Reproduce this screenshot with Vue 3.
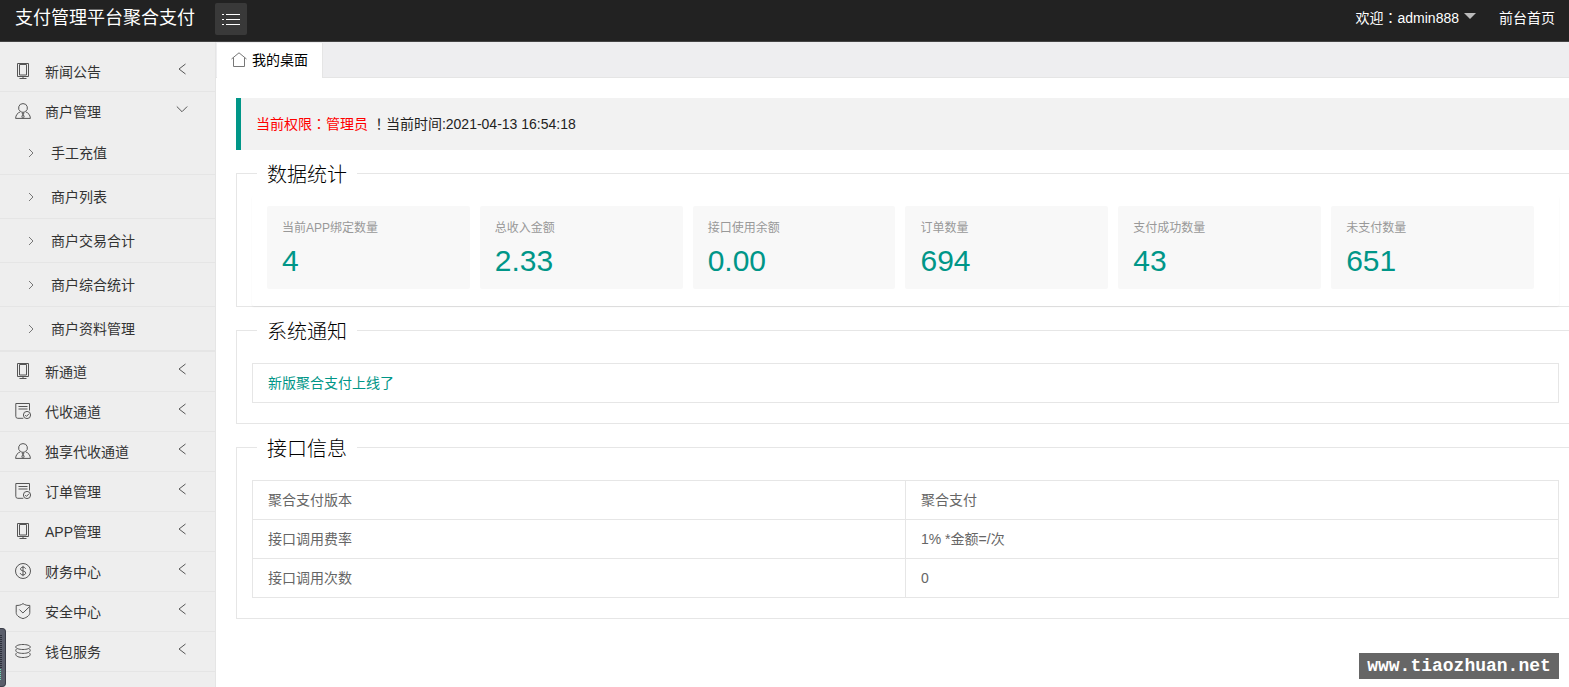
<script setup>
import { ref } from 'vue'

const menu = ref([
  { icon: 'phone', label: '新闻公告' },
  {
    icon: 'user',
    label: '商户管理',
    open: true,
    children: ['手工充值', '商户列表', '商户交易合计', '商户综合统计', '商户资料管理'],
  },
  { icon: 'phone', label: '新通道' },
  { icon: 'order', label: '代收通道' },
  { icon: 'user', label: '独享代收通道' },
  { icon: 'order', label: '订单管理' },
  { icon: 'phone', label: 'APP管理' },
  { icon: 'money', label: '财务中心' },
  { icon: 'shield', label: '安全中心' },
  { icon: 'coins', label: '钱包服务' },
])

const stats = [
  { label: '当前APP绑定数量', value: '4' },
  { label: '总收入金额', value: '2.33' },
  { label: '接口使用余额', value: '0.00' },
  { label: '订单数量', value: '694' },
  { label: '支付成功数量', value: '43' },
  { label: '未支付数量', value: '651' },
]

const info = [
  ['聚合支付版本', '聚合支付'],
  ['接口调用费率', '1% *金额=/次'],
  ['接口调用次数', '0'],
]

const icons = {
  phone: ['M2.500 .5h11v13h-11z', 'M4.500 1.500h7v10.500h-7z', 'M8 13.500v2M4.500 15.500h7'],
  user: [
    'M8 .6a4.300 4.300 0 0 1 2.300 8c-.7.5-1.400.7-2.300.7s-1.600-.2-2.300-.7A4.300 4.300 0 0 1 8 .6z',
    'M5.300 8.800C2.500 10 .8 12 .6 15.400h14.800c-.2-3.400-1.900-5.400-4.700-6.600',
    'M7.200 10.200h1.600l-.4 1.400.8 2.600L8 15.300l-1.200-1.100.8-2.600z',
  ],
  order: [
    'M14.500 7.500v-7H.8v12.800a2 2 0 0 0 2 2h5.500',
    'M3.500 3.500h9M3.500 6h9',
    'M12 8.400a3.600 3.600 0 1 1 0 7.200 3.600 3.600 0 0 1 0-7.200z',
    'M10.200 12l1.300 1.400 2.500-2.700',
  ],
  money: [
    'M8 .5a7.500 7.500 0 1 1 0 15 7.500 7.500 0 0 1 0-15z',
    'M10.500 5.700C10.200 4.600 9.300 4.200 8 4.200c-1.500 0-2.500.7-2.500 1.800 0 2.700 5.200 1.200 5.200 4 0 1.200-1.100 1.900-2.700 1.900-1.500 0-2.600-.6-2.800-1.900M8 2.800v10.400',
  ],
  shield: [
    'M8 .6c2 1.500 4.300 2 6.800 1.800v7.200c0 2.700-2.600 4.800-6.800 6-4.200-1.200-6.800-3.300-6.800-6V2.400C3.700 2.600 6 2.100 8 .6z',
    'M4.400 6.500l3.500 3.500 6.500-6.200',
  ],
  coins: [
    'M8 1.500c4 0 7.300 1.100 7.300 2.500S12 6.500 8 6.500.7 5.400.7 4 4 1.500 8 1.500z',
    'M1.500 6C-.8 8.300 2.500 10.400 8 10.400S16.800 8.300 14.500 6',
    'M1.500 10C-.8 12.300 2.500 14.500 8 14.500s8.800-2.200 6.500-4.500',
  ],
}
</script>

<template>
  <div class="page">
    <header class="topbar">
      <h1 class="brand">支付管理平台聚合支付</h1>
      <button class="toggle" type="button" aria-label="菜单">
        <svg width="18" height="14" viewBox="0 0 18 14" fill="none" stroke="#fff" stroke-width="1">
          <path d="M4 2.500h14M4 7.500h14M4 12.500h14M0 2.500h2M0 7.500h2M0 12.500h2" />
        </svg>
      </button>
      <nav class="account">
        <a href="#">欢迎<span class="mark">：</span>admin888<i class="caret"></i></a>
        <a href="#">前台首页</a>
      </nav>
    </header>

    <div class="body">
      <aside class="side">
        <ul class="menu">
          <li v-for="item in menu" :key="item.label" class="item">
            <a href="#" class="link" @click.prevent="item.open = !item.open">
              <svg class="icon" width="16" height="16" viewBox="0 0 16 16">
                <path v-for="d in icons[item.icon]" :key="d" :d="d" />
              </svg>
              <span class="label">{{ item.label }}</span>
              <svg class="arrow" width="12" height="12" viewBox="0 0 12 12">
                <path :d="item.open ? 'M.8 3.500L6 8.700l5.200-5.200' : 'M9.500 1L3 6l6.500 5'" />
              </svg>
            </a>
            <ul v-if="item.children && item.open" class="sub">
              <li v-for="child in item.children" :key="child">
                <a href="#" class="sublink">
                  <svg class="tick" width="6" height="8" viewBox="0 0 6 8"><path d="M1 0l4 4-4 4" /></svg>
                  {{ child }}
                </a>
              </li>
            </ul>
          </li>
        </ul>
      </aside>

      <div class="main">
        <div class="tabs">
          <button class="tab" type="button">
            <svg width="16" height="15" viewBox="0 0 16 15">
              <path d="M.5 7L8 .8 15.500 7M2.500 5.500v9h11v-9" />
            </svg>
            我的桌面
          </button>
        </div>

        <main class="content">
          <blockquote class="notice">
            <span class="red">当前权限<span class="mark">：</span>管理员</span>&nbsp;<span class="mark">！</span>当前时间:2021-04-13 16:54:18
          </blockquote>

          <fieldset class="group stats">
            <legend>数据统计</legend>
            <div class="panel">
              <section v-for="s in stats" :key="s.label" class="card">
                <h3>{{ s.label }}</h3>
                <p>{{ s.value }}</p>
              </section>
            </div>
          </fieldset>

          <fieldset class="group">
            <legend>系统通知</legend>
            <table class="grid news">
              <tbody>
                <tr><td><a href="#">新版聚合支付上线了</a></td></tr>
              </tbody>
            </table>
          </fieldset>

          <fieldset class="group">
            <legend>接口信息</legend>
            <table class="grid">
              <tbody>
                <tr v-for="row in info" :key="row[0]">
                  <td v-for="cell in row" :key="cell">{{ cell }}</td>
                </tr>
              </tbody>
            </table>
          </fieldset>
        </main>
      </div>
    </div>

    <div class="meter"></div>
    <div class="watermark">www.tiaozhuan.net</div>
  </div>
</template>

<style>
body {
  background: #fff;
}
</style>

<style scoped>
* {
  box-sizing: border-box;
}
.page {
  position: relative;
  display: flex;
  flex-direction: column;
  min-height: 100vh;
  overflow: hidden;
  font: 14px/24px "Liberation Sans", "Noto Sans CJK SC", sans-serif;
  color: #222;
}
ul,
h1,
h3,
p {
  margin: 0;
  padding: 0;
  list-style: none;
  font-weight: 400;
}
a {
  color: inherit;
  text-decoration: none;
}
button {
  border: 0;
  padding: 0;
  font: inherit;
  color: inherit;
}
svg {
  display: block;
  flex: none;
}
.mark {
  font-family: "Noto Sans CJK TC", sans-serif;
  line-height: 1;
}
.topbar {
  display: flex;
  height: 42px;
  padding: 0 14px 0 15px;
  background: #222;
  border-bottom: 1px solid #444;
  color: #fff;
}
.brand {
  width: 200px;
  font-size: 18px;
  line-height: 36px;
}
.toggle {
  display: flex;
  align-items: center;
  justify-content: center;
  width: 32px;
  height: 32px;
  margin-top: 3px;
  border-radius: 2px;
  background: #393939;
}
.account {
  display: flex;
  gap: 23px;
  margin-left: auto;
  line-height: 36px;
}
.caret {
  display: inline-block;
  margin-left: 5px;
  border: 6px solid transparent;
  border-top-color: #bbb;
  border-bottom: 0;
  vertical-align: 4px;
}
.body {
  display: flex;
  flex: 1;
}
.side {
  flex: none;
  width: 216px;
  padding-top: 10px;
  background: #eee;
  border-right: 1px solid #e5e5e5;
}
.menu {
  color: #333;
}
.item {
  border-bottom: 1px solid #e5e5e5;
}
.link {
  display: flex;
  align-items: center;
  height: 39px;
  padding: 0 27px 0 15px;
}
.label {
  margin-left: 14px;
}
.icon,
.arrow,
.tick,
.tab svg {
  fill: none;
  stroke: #555;
  stroke-width: 1;
}
.icon {
  margin-bottom: 1px;
}
.arrow {
  margin: 0 0 5px auto;
}
.sublink {
  display: flex;
  align-items: center;
  gap: 17px;
  height: 44px;
  padding-left: 28px;
  border-bottom: 1px solid #e5e5e5;
}
.tick {
  stroke: #777;
}
.main {
  flex: 1;
  min-width: 0;
}
.tabs {
  display: flex;
  height: 36px;
  padding: 1px 0 0 1px;
  background: #eeeef0;
  border-bottom: 1px solid #e5e5e5;
}
.tab {
  display: flex;
  align-items: center;
  gap: 5px;
  height: 35px;
  padding: 0 14px 2px;
  background: #fff;
  border-right: 1px solid #e5e5e5;
  color: #000;
}
.tab svg {
  stroke: #777;
}
.content {
  padding: 20px 0 0 20px;
}
.notice {
  margin: 0;
  padding: 14px 15px;
  border-left: 5px solid #009688;
  background: #f2f2f2;
}
.red {
  color: #f00;
}
.group {
  min-width: 0;
  margin: 11px 0 0;
  padding: 20px 10px 20px 15px;
  border: 1px solid #e6e6e6;
  border-right: 0;
}
.group legend {
  margin-left: 5px;
  padding: 3px 10px 0;
  font-size: 20px;
  font-weight: 300;
  line-height: 22px;
  color: #000;
}
.stats {
  padding-top: 10px;
  padding-bottom: 0;
}
.panel {
  display: grid;
  grid-template-columns: repeat(6, 1fr);
  gap: 10px;
  padding: 10px 25px 17px 15px;
  border-radius: 2px;
  box-shadow: 0 1px 2px rgba(0, 0, 0, 0.05);
}
.card {
  height: 83px;
  padding: 10px 15px;
  border-radius: 2px;
  background: #f8f8f8;
}
.card h3 {
  font-size: 12px;
  line-height: 24px;
  color: #999;
}
.card p {
  font-size: 30px;
  line-height: 42px;
  color: #009688;
}
.grid {
  width: 100%;
  table-layout: fixed;
  border-collapse: collapse;
  color: #666;
}
.grid td {
  height: 39px;
  padding: 0 15px;
  border: 1px solid #e6e6e6;
}
.news td {
  color: #009688;
}
.meter {
  position: absolute;
  left: 0;
  bottom: 0;
  width: 6px;
  height: 59px;
  border: 1px solid #3a3d48;
  border-left: 0;
  border-radius: 0 4px 4px 0;
  background:
    repeating-linear-gradient(#2c2f3a 0 1px, transparent 1px 2px) 0 6px / 2px 34px no-repeat,
    repeating-linear-gradient(#6fd8b4 0 1px, transparent 1px 2px) 0 40px / 1px 12px no-repeat,
    #5a5e6b;
}
.watermark {
  position: absolute;
  right: 10px;
  bottom: 8px;
  width: 200px;
  background: #666;
  color: #fff;
  font: bold 18px/26px "Liberation Mono", monospace;
  text-align: center;
}
</style>
